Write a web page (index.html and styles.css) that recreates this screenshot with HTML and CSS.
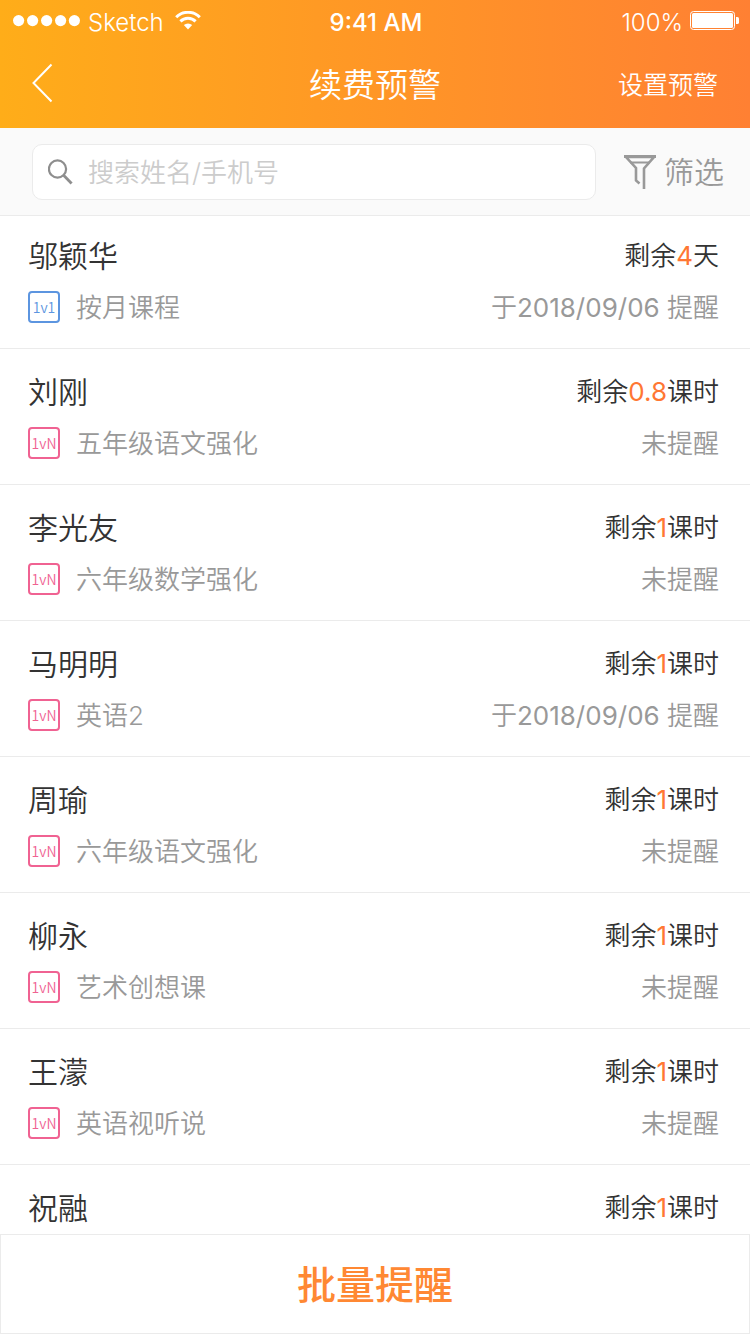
FILE: index.html
```html
<!DOCTYPE html>
<html lang="zh-CN">
<head>
    <meta charset="UTF-8">
    <meta name="viewport" content="width=device-width, initial-scale=1.0">
    <title>续费预警</title>
    <link rel="stylesheet" href="styles.css">
</head>
<body>
    <header class="header">
        <div class="status-bar">
            <div class="status-left">
                <svg class="signal" width="67" height="12" viewBox="0 0 67 12" fill="#fff">
                    <circle cx="5.6" cy="5.6" r="5.6"/>
                    <circle cx="19.6" cy="5.6" r="5.6"/>
                    <circle cx="33.6" cy="5.6" r="5.6"/>
                    <circle cx="47.6" cy="5.6" r="5.6"/>
                    <circle cx="61.4" cy="5.6" r="5.6"/>
                </svg>
                <span class="carrier">Sketch</span>
                <svg class="wifi" width="26" height="19" viewBox="0 0 26 19">
                    <path d="M1.2 6.2a16.7 16.7 0 0 1 23.6 0M5.4 10.4a10.7 10.7 0 0 1 15.2 0" fill="none" stroke="#fff" stroke-width="3"/>
                    <path d="M13 18.4l-4.2-4.3a6 6 0 0 1 8.4 0z" fill="#fff"/>
                </svg>
            </div>
            <div class="status-time">9:41 AM</div>
            <div class="status-right">
                <span>100%</span>
                <svg class="battery" width="49" height="19" viewBox="0 0 49 19">
                    <rect x="0.5" y="0.5" width="44" height="18" rx="3" fill="none" stroke="#fff"/>
                    <rect x="2" y="2" width="41" height="15" rx="1.5" fill="#fff"/>
                    <path d="M46 6h1.4a1.6 1.6 0 0 1 1.6 1.6v3.8a1.6 1.6 0 0 1-1.6 1.6H46z" fill="#fff"/>
                </svg>
            </div>
        </div>
        <nav class="nav-bar">
            <button class="back-button" aria-label="返回">
                <svg width="22" height="40" viewBox="0 0 22 40">
                    <path d="M19.5 1.5L1.5 20l18 18.5" fill="none" stroke="#fff" stroke-width="2"/>
                </svg>
            </button>
            <h1 class="title">续费预警</h1>
            <a class="nav-link" href="#">设置预警</a>
        </nav>
    </header>

    <div class="search-bar">
        <label class="search-box">
            <svg width="25" height="26" viewBox="0 0 25 26" fill="none" stroke="#8e8e8e">
                <circle cx="9.5" cy="10" r="8.6" stroke-width="2.2"/>
                <path d="M15.6 16.2l8 8.2" stroke-width="2.8"/>
            </svg>
            <input class="search-input" type="search" placeholder="搜索姓名/手机号" aria-label="搜索">
        </label>
        <button class="filter-button">
            <svg width="32" height="34" viewBox="0 0 32 34" fill="none" stroke="#999" stroke-width="2.6">
                <path d="M20 34V13.5L30 2H2L12 13V25.5L15.5 28.5"/>
                <path d="M0 1.5H32" stroke-width="3"/>
                <path d="M6 7.5H26" stroke-width="2"/>
            </svg>
            <span class="filter-text">筛选</span>
        </button>
    </div>

    <main class="list">
        <article class="item">
            <div class="row-top">
                <h2 class="name">邬颖华</h2>
                <p class="remain">剩余<span class="count">4</span>天</p>
            </div>
            <div class="row-bottom">
                <span class="tag tag-single">1v1</span>
                <span class="course">按月课程</span>
                <span class="notice">于<time class="date">2018/09/06</time> 提醒</span>
            </div>
        </article>
        <article class="item">
            <div class="row-top">
                <h2 class="name">刘刚</h2>
                <p class="remain">剩余<span class="count">0.8</span>课时</p>
            </div>
            <div class="row-bottom">
                <span class="tag">1vN</span>
                <span class="course">五年级语文强化</span>
                <span class="notice">未提醒</span>
            </div>
        </article>
        <article class="item">
            <div class="row-top">
                <h2 class="name">李光友</h2>
                <p class="remain">剩余<span class="count">1</span>课时</p>
            </div>
            <div class="row-bottom">
                <span class="tag">1vN</span>
                <span class="course">六年级数学强化</span>
                <span class="notice">未提醒</span>
            </div>
        </article>
        <article class="item">
            <div class="row-top">
                <h2 class="name">马明明</h2>
                <p class="remain">剩余<span class="count">1</span>课时</p>
            </div>
            <div class="row-bottom">
                <span class="tag">1vN</span>
                <span class="course">英语2</span>
                <span class="notice">于<time class="date">2018/09/06</time> 提醒</span>
            </div>
        </article>
        <article class="item">
            <div class="row-top">
                <h2 class="name">周瑜</h2>
                <p class="remain">剩余<span class="count">1</span>课时</p>
            </div>
            <div class="row-bottom">
                <span class="tag">1vN</span>
                <span class="course">六年级语文强化</span>
                <span class="notice">未提醒</span>
            </div>
        </article>
        <article class="item">
            <div class="row-top">
                <h2 class="name">柳永</h2>
                <p class="remain">剩余<span class="count">1</span>课时</p>
            </div>
            <div class="row-bottom">
                <span class="tag">1vN</span>
                <span class="course">艺术创想课</span>
                <span class="notice">未提醒</span>
            </div>
        </article>
        <article class="item">
            <div class="row-top">
                <h2 class="name">王濛</h2>
                <p class="remain">剩余<span class="count">1</span>课时</p>
            </div>
            <div class="row-bottom">
                <span class="tag">1vN</span>
                <span class="course">英语视听说</span>
                <span class="notice">未提醒</span>
            </div>
        </article>
        <article class="item">
            <div class="row-top">
                <h2 class="name">祝融</h2>
                <p class="remain">剩余<span class="count">1</span>课时</p>
            </div>
        </article>
    </main>

    <button class="batch-button">批量提醒</button>
</body>
</html>
```

FILE: styles.css
```css
* {
    box-sizing: border-box;
}

body {
    margin: 0;
    height: 100vh;
    display: flex;
    flex-direction: column;
    background: #fff;
    color: #333;
    font-family: Inter, "Noto Sans CJK SC", sans-serif;
    font-size: 26px;
    font-weight: 350;
}

h1, h2, p {
    margin: 0;
    font-weight: inherit;
}

button {
    padding: 0;
    border: none;
    background: none;
    font-family: inherit;
    font-weight: inherit;
    cursor: pointer;
}

svg {
    display: block;
    flex-shrink: 0;
}

/* Header */
.header {
    flex-shrink: 0;
    background: linear-gradient(90deg, #ffad19, #ff8033);
    color: #fff;
}

.status-bar {
    display: grid;
    grid-template-columns: 1fr auto 1fr;
    align-items: center;
    height: 40px;
    padding: 4px 11px 0 13px;
    font-size: 24px;
    line-height: 38px;
}

.status-left,
.status-right {
    display: flex;
    font-weight: 300;
}

.status-left {
    gap: 8px;
}

.status-right {
    justify-content: flex-end;
    gap: 7px;
}

.signal {
    margin-top: 11px;
}

.wifi {
    margin: 7px 0 0 3px;
}

.battery {
    margin-top: 7px;
}

.status-time {
    font-weight: 500;
}

.nav-bar {
    display: grid;
    grid-template-columns: 1fr auto 1fr;
    align-items: center;
    height: 88px;
    padding: 0 32px 2px;
}

.back-button {
    justify-self: start;
}

.title {
    font-size: 33px;
}

.nav-link {
    justify-self: end;
    color: #fff;
    font-size: 25px;
    text-decoration: none;
}

/* Search */
.search-bar {
    flex-shrink: 0;
    display: flex;
    align-items: center;
    gap: 28px;
    height: 88px;
    padding: 0 26px 0 32px;
    background: #fafafa;
    border-bottom: 1px solid #ebebeb;
}

.search-box {
    flex: 1;
    display: flex;
    align-items: center;
    gap: 15px;
    height: 56px;
    padding: 0 15px;
    background: #fff;
    border: 1px solid #ebebeb;
    border-radius: 10px;
}

.search-input {
    flex: 1;
    min-width: 0;
    padding: 2px 0 0;
    border: none;
    outline: none;
    background: none;
    color: #333;
    font-family: inherit;
    font-size: 26px;
    font-weight: inherit;
}

.search-input::placeholder {
    color: #ccc;
}

.filter-button {
    display: flex;
    align-items: center;
    gap: 8px;
    color: #999;
    font-size: 30px;
}

.filter-text {
    padding-bottom: 3px;
}

/* List */
.list {
    flex: 1;
    min-height: 0;
    overflow-y: auto;
    scrollbar-width: none;
}

.item {
    padding: 22px 31px 21px 28px;
    border-bottom: 1px solid #ebebeb;
}

.item:first-child {
    padding-top: 19px;
}

.row-top,
.row-bottom {
    display: flex;
    align-items: center;
}

.row-top {
    justify-content: space-between;
    line-height: 42px;
}

.row-bottom {
    margin-top: 10px;
    line-height: 38px;
    color: #999;
}

.name {
    font-size: 30px;
}

.count {
    color: #ff7733;
    font-weight: 400;
}

.date {
    font-weight: 400;
}

.tag {
    width: 32px;
    height: 32px;
    border: 2px solid #f06292;
    border-radius: 4px;
    color: #f06292;
    font-family: "Noto Sans CJK SC", sans-serif;
    font-size: 14px;
    line-height: 28px;
    text-align: center;
}

.tag-single {
    border-color: #5c95e0;
    color: #5c95e0;
}

.course,
.notice {
    padding-top: 2px;
}

.course {
    margin-left: 16px;
}

.notice {
    margin-left: auto;
}

/* Bottom action */
.batch-button {
    flex-shrink: 0;
    height: 100px;
    padding-bottom: 4px;
    border: 1px solid #ebebeb;
    background: #fff;
    color: #ff8833;
    font-size: 39px;
    font-weight: 500;
}
```
